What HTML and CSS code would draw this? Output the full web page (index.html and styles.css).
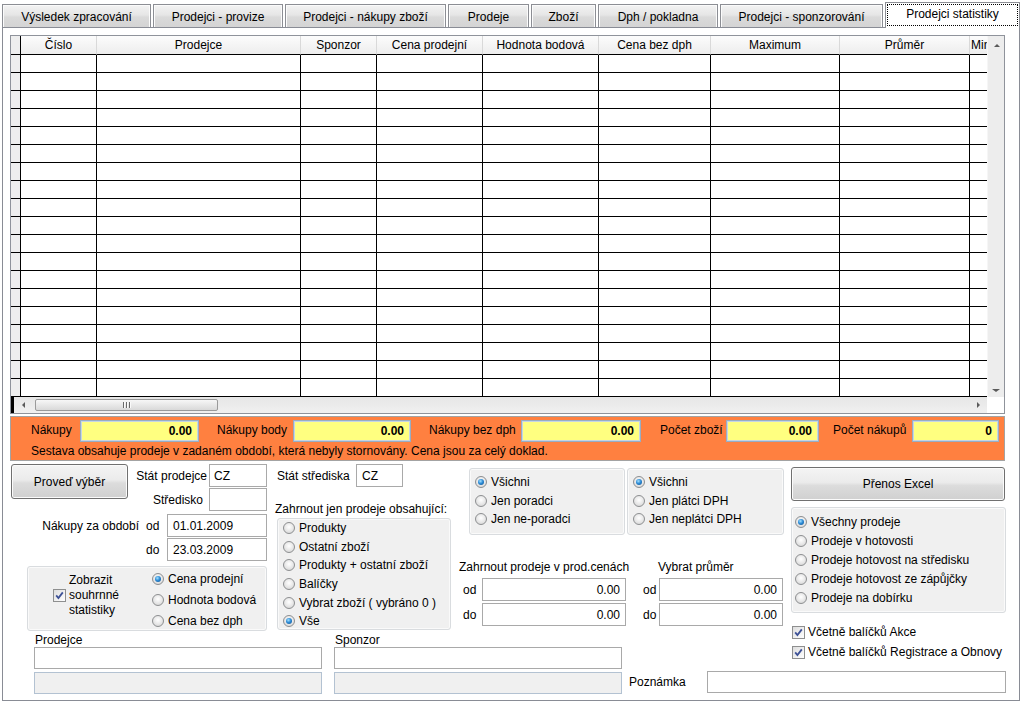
FILE: index.html
```html
<!DOCTYPE html>
<html lang="cs">
<head>
<meta charset="utf-8">
<title>Prodejci statistiky</title>
<link rel="stylesheet" href="styles.css">
</head>
<body>
<div class="tabs">
  <div class="tab">Výsledek zpracování</div>
  <div class="tab">Prodejci - provize</div>
  <div class="tab">Prodejci - nákupy zboží</div>
  <div class="tab">Prodeje</div>
  <div class="tab">Zboží</div>
  <div class="tab">Dph / pokladna</div>
  <div class="tab">Prodejci - sponzorování</div>
  <div class="tab active"><span class="focus">Prodejci statistiky</span></div>
</div>
<div class="panel">
  <div class="grid">
    <div class="cells">
      <div class="r hd"><span></span><span>Číslo</span><span>Prodejce</span><span>Sponzor</span><span>Cena prodejní</span><span>Hodnota bodová</span><span>Cena bez dph</span><span>Maximum</span><span>Průměr</span><span>Minimum</span></div>
      <div class="r"><i></i><i></i><i></i><i></i><i></i><i></i><i></i><i></i><i></i><i></i></div>
      <div class="r"><i></i><i></i><i></i><i></i><i></i><i></i><i></i><i></i><i></i><i></i></div>
      <div class="r"><i></i><i></i><i></i><i></i><i></i><i></i><i></i><i></i><i></i><i></i></div>
      <div class="r"><i></i><i></i><i></i><i></i><i></i><i></i><i></i><i></i><i></i><i></i></div>
      <div class="r"><i></i><i></i><i></i><i></i><i></i><i></i><i></i><i></i><i></i><i></i></div>
      <div class="r"><i></i><i></i><i></i><i></i><i></i><i></i><i></i><i></i><i></i><i></i></div>
      <div class="r"><i></i><i></i><i></i><i></i><i></i><i></i><i></i><i></i><i></i><i></i></div>
      <div class="r"><i></i><i></i><i></i><i></i><i></i><i></i><i></i><i></i><i></i><i></i></div>
      <div class="r"><i></i><i></i><i></i><i></i><i></i><i></i><i></i><i></i><i></i><i></i></div>
      <div class="r"><i></i><i></i><i></i><i></i><i></i><i></i><i></i><i></i><i></i><i></i></div>
      <div class="r"><i></i><i></i><i></i><i></i><i></i><i></i><i></i><i></i><i></i><i></i></div>
      <div class="r"><i></i><i></i><i></i><i></i><i></i><i></i><i></i><i></i><i></i><i></i></div>
      <div class="r"><i></i><i></i><i></i><i></i><i></i><i></i><i></i><i></i><i></i><i></i></div>
      <div class="r"><i></i><i></i><i></i><i></i><i></i><i></i><i></i><i></i><i></i><i></i></div>
      <div class="r"><i></i><i></i><i></i><i></i><i></i><i></i><i></i><i></i><i></i><i></i></div>
      <div class="r"><i></i><i></i><i></i><i></i><i></i><i></i><i></i><i></i><i></i><i></i></div>
      <div class="r"><i></i><i></i><i></i><i></i><i></i><i></i><i></i><i></i><i></i><i></i></div>
      <div class="r"><i></i><i></i><i></i><i></i><i></i><i></i><i></i><i></i><i></i><i></i></div>
      <div class="r"><i></i><i></i><i></i><i></i><i></i><i></i><i></i><i></i><i></i><i></i></div>
    </div>
    <div class="vscroll"><span class="arr up"></span><span class="arr down"></span></div>
    <div class="hscroll"><span class="hbar"></span><span class="arr left"></span><span class="thumb"><span class="grip"></span></span><span class="arr right"></span></div>
    <div class="corner"></div>
  </div>

  <div class="summary">
    <div class="sum-row">
      <span class="sum-lbl">Nákupy</span><span class="yf">0.00</span>
      <span class="sum-lbl p18">Nákupy body</span><span class="yf">0.00</span>
      <span class="sum-lbl p18">Nákupy bez dph</span><span class="yf">0.00</span>
      <span class="sum-lbl p19">Počet zboží</span><span class="yf">0.00</span>
      <span class="sum-lbl p14">Počet nákupů</span><span class="yf">0</span>
    </div>
    <div class="sum-note">Sestava obsahuje prodeje v zadaném období, která nebyly stornovány. Cena jsou za celý doklad.</div>
  </div>

  <div class="bottom">
    <div class="leftmain">
      <div class="toprow">
        <div class="colA">
          <div class="a-row1">
            <div class="btn btn-run">Proveď výběr</div>
            <div class="pair-grid">
              <span class="plbl">Stát prodejce</span><span class="inp w58">CZ</span>
              <span class="plbl pr6">Středisko</span><span class="inp w58"></span>
            </div>
          </div>
          <div class="date-row"><span class="lbl-period">Nákupy za období</span><span class="lbl-od">od</span><span class="inp date">01.01.2009</span></div>
          <div class="date-row second"><span class="lbl-period"></span><span class="lbl-od">do</span><span class="inp date">23.03.2009</span></div>
          <div class="group gA">
            <div class="chk-block">
              <span class="chk"><svg width="11" height="11" viewBox="0 0 11 11"><path d="M2.2 5.4 L4.4 8 L8.8 2.4" fill="none" stroke="#3d5196" stroke-width="1.8"/></svg></span>
              <span class="chk-text">Zobrazit<br>souhrnné<br>statistiky</span>
            </div>
            <div class="radios rA">
              <div class="ropt"><span class="radio on"></span>Cena prodejní</div>
              <div class="ropt"><span class="radio"></span>Hodnota bodová</div>
              <div class="ropt"><span class="radio"></span>Cena bez dph</div>
            </div>
          </div>
        </div>

        <div class="colB">
          <div class="b-row"><span class="b-lbl">Stát střediska</span><span class="inp w47">CZ</span></div>
          <div class="b-title">Zahrnout jen prodeje obsahující:</div>
          <div class="group gB">
            <div class="ropt"><span class="radio"></span>Produkty</div>
            <div class="ropt"><span class="radio"></span>Ostatní zboží</div>
            <div class="ropt"><span class="radio"></span>Produkty + ostatní zboží</div>
            <div class="ropt"><span class="radio"></span>Balíčky</div>
            <div class="ropt"><span class="radio"></span>Vybrat zboží ( vybráno 0 )</div>
            <div class="ropt"><span class="radio on"></span>Vše</div>
          </div>
        </div>

        <div class="colC">
          <div class="c-groups">
            <div class="group gC1">
              <div class="ropt"><span class="radio on"></span>Všichni</div>
              <div class="ropt"><span class="radio"></span>Jen poradci</div>
              <div class="ropt"><span class="radio"></span>Jen ne-poradci</div>
            </div>
            <div class="group gC2">
              <div class="ropt"><span class="radio on"></span>Všichni</div>
              <div class="ropt"><span class="radio"></span>Jen plátci DPH</div>
              <div class="ropt"><span class="radio"></span>Jen neplátci DPH</div>
            </div>
          </div>
          <div class="c-ranges">
            <div class="range range1">
              <div class="r-title">Zahrnout prodeje v prod.cenách</div>
              <div class="r-row"><span class="r-lbl">od</span><span class="inp num w144">0.00</span></div>
              <div class="r-row second"><span class="r-lbl">do</span><span class="inp num w144">0.00</span></div>
            </div>
            <div class="range range2">
              <div class="r-title">Vybrat průměr</div>
              <div class="r-row"><span class="r-lbl">od</span><span class="inp num w124">0.00</span></div>
              <div class="r-row second"><span class="r-lbl">do</span><span class="inp num w124">0.00</span></div>
            </div>
          </div>
        </div>
      </div>

      <div class="botrow">
        <div class="pblock">
          <div class="f-lbl">Prodejce</div>
          <div class="inp wide"></div>
          <div class="inp wide dis"></div>
        </div>
        <div class="pblock sblock">
          <div class="f-lbl">Sponzor</div>
          <div class="inp wide"></div>
          <div class="inp wide dis"></div>
        </div>
        <div class="nblock">
          <span class="n-lbl">Poznámka</span>
          <span class="inp note"></span>
        </div>
      </div>
    </div>

    <div class="colD">
      <div class="btn btn-excel">Přenos Excel</div>
      <div class="group gD">
        <div class="ropt"><span class="radio on"></span>Všechny prodeje</div>
        <div class="ropt"><span class="radio"></span>Prodeje v hotovosti</div>
        <div class="ropt"><span class="radio"></span>Prodeje hotovost na středisku</div>
        <div class="ropt"><span class="radio"></span>Prodeje hotovost ze zápůjčky</div>
        <div class="ropt"><span class="radio"></span>Prodeje na dobírku</div>
      </div>
      <div class="chk-row first"><span class="chk"><svg width="11" height="11" viewBox="0 0 11 11"><path d="M2.2 5.4 L4.4 8 L8.8 2.4" fill="none" stroke="#3d5196" stroke-width="1.8"/></svg></span>Včetně balíčků Akce</div>
      <div class="chk-row"><span class="chk"><svg width="11" height="11" viewBox="0 0 11 11"><path d="M2.2 5.4 L4.4 8 L8.8 2.4" fill="none" stroke="#3d5196" stroke-width="1.8"/></svg></span>Včetně balíčků Registrace a Obnovy</div>
    </div>
  </div>
</div>
</body>
</html>
```

FILE: styles.css
```css
* { box-sizing: border-box; }
html, body { margin: 0; padding: 0; background: #fff; }
body {
  width: 1023px;
  height: 703px;
  overflow: hidden;
  font-family: "Liberation Sans", Arial, sans-serif;
  font-size: 12px;
  color: #000;
}

/* ---------- tabs ---------- */
.tabs {
  display: flex;
  align-items: flex-end;
  gap: 2px;
  height: 27px;
  padding-left: 2px;
}
.tab {
  flex: 0 0 auto;
  height: 23px;
  display: flex;
  align-items: center;
  justify-content: center;
  white-space: nowrap;
  border: 1px solid #8c8e94;
  border-bottom: none;
  background: linear-gradient(#f3f3f3, #e6e6e6 45%, #dadada 55%, #d4d4d4);
  box-shadow: inset 1px 1px 0 #fbfbfb, inset -1px 0 0 #fbfbfb;
  padding-top: 1px;
}
.tab:nth-child(1) { width: 149px; }
.tab:nth-child(2) { width: 130px; }
.tab:nth-child(3) { width: 161px; }
.tab:nth-child(4) { width: 81px; }
.tab:nth-child(5) { width: 65px; }
.tab:nth-child(6) { width: 120px; }
.tab:nth-child(7) { width: 163px; }
.tab.active {
  width: 135px;
  height: 26px;
  margin-bottom: -1px;
  background: #fff;
  box-shadow: none;
  padding: 1px 1px 2px 1px;
  position: relative;
  z-index: 1;
  align-items: stretch;
}
.focus {
  flex: 1;
  display: flex;
  align-items: center;
  justify-content: center;
  border: 1px dotted #000;
  padding-bottom: 2px;
}

/* ---------- panel ---------- */
.panel {
  margin-left: 2px;
  width: 1018px;
  height: 674px;
  border: 1px solid #898c95;
  background: #fff;
  padding: 7px 0 0 7px;
}

/* ---------- data grid ---------- */
.grid {
  width: 995px;
  height: 379px;
  border: 1px solid #8f939b;
  display: grid;
  grid-template-columns: 976px 17px;
  grid-template-rows: 361px 16px;
}
.cells { overflow: hidden; }
.r { display: flex; height: 18px; }
.r > * {
  flex: 0 0 auto;
  display: block;
  height: 18px;
  border-right: 1px solid #000;
  border-bottom: 1px solid #000;
  background: #fff;
  overflow: hidden;
  white-space: nowrap;
}
.r > :nth-child(1) { width: 10px; background: #eeeeee; }
.r > :nth-child(2) { width: 76px; }
.r > :nth-child(3) { width: 204px; }
.r > :nth-child(4) { width: 76px; }
.r > :nth-child(5) { width: 106px; }
.r > :nth-child(6) { width: 116px; }
.r > :nth-child(7) { width: 112px; }
.r > :nth-child(8) { width: 129px; }
.r > :nth-child(9) { width: 130px; }
.r > :nth-child(10) { width: 130px; }
.r.hd { height: 19px; }
.r.hd > * {
  height: 19px;
  line-height: 18px;
  text-align: center;
  background: linear-gradient(#fcfcfc, #ededed);
  border-right-color: #d9d9d9;
}
.r.hd > :nth-child(1) { border-right-color: #000; background: #eeeeee; }
.r.hd > :nth-child(10) { text-align: left; padding-left: 1px; }

.vscroll {
  grid-column: 2;
  grid-row: 1;
  background: #ededed;
  border-left: 1px solid #f6f6f6;
  display: flex;
  flex-direction: column;
  justify-content: space-between;
  align-items: center;
  padding: 8px 0 5px 0;
}
.hscroll {
  grid-column: 1;
  grid-row: 2;
  background: linear-gradient(#e6e6e6, #f0f0f0);
  display: flex;
  align-items: center;
}
.corner { grid-column: 2; grid-row: 2; background: #fff; }
.hbar { width: 3px; height: 16px; background: #000; flex: 0 0 auto; }
.arr { width: 0; height: 0; flex: 0 0 auto; }
.arr.up { border-left: 3px solid transparent; border-right: 3px solid transparent; border-bottom: 3px solid #5a5a5a; margin-left: 1px; }
.arr.down { border-left: 4px solid transparent; border-right: 4px solid transparent; border-top: 3px solid #5a5a5a; }
.arr.left { border-top: 3px solid transparent; border-bottom: 3px solid transparent; border-right: 3px solid #5a5a5a; margin-left: 8px; }
.arr.right { border-top: 3px solid transparent; border-bottom: 3px solid transparent; border-left: 3px solid #5a5a5a; margin-left: auto; margin-right: 7px; }
.thumb {
  flex: 0 0 auto;
  width: 183px;
  height: 12px;
  margin-left: 10px;
  border: 1px solid #9a9a9a;
  border-radius: 2px;
  background: linear-gradient(#f7f7f7, #e8e8e8 50%, #d9d9d9);
  display: flex;
  align-items: center;
  justify-content: center;
}
.grip {
  width: 8px;
  height: 6px;
  background: repeating-linear-gradient(90deg, #6a6a6a 0 1px, #fafafa 1px 2px, transparent 2px 3px);
}

/* ---------- orange summary ---------- */
.summary {
  width: 995px;
  height: 45px;
  margin-top: 2px;
  border: 1px solid #a3a3a3;
  background: #ff8040;
  padding: 3px 0 0 20px;
}
.sum-row {
  display: grid;
  grid-template-columns: 49px 119px 94px 118px 110px 120px 85px 93px 93px 87px;
  height: 22px;
}
.sum-lbl { padding-top: 3px; line-height: 14px; white-space: nowrap; }
.sum-lbl.p18 { padding-left: 18px; }
.sum-lbl.p19 { padding-left: 19px; }
.sum-lbl.p14 { padding-left: 14px; }
.yf {
  display: flex;
  align-items: center;
  justify-content: flex-end;
  padding-right: 6px;
  background: #ffff80;
  border: 1px solid #98adc3;
  box-shadow: inset 0 0 0 1px #c6d5e4;
  font-weight: bold;
}
.sum-note { margin-top: 2px; line-height: 14px; white-space: nowrap; }

/* ---------- shared controls ---------- */
.inp {
  flex: 0 0 auto;
  display: flex;
  align-items: center;
  height: 23px;
  border: 1px solid #a9a9a9;
  background: #fff;
  padding: 0 4px;
  white-space: nowrap;
}
.inp.num { justify-content: flex-end; padding-right: 5px; }
.inp.dis { background: #f0f0f0; border-color: #b3c2d2; }
.w58 { width: 58px; }
.w47 { width: 47px; padding-left: 5px; }
.w144 { width: 144px; }
.w124 { width: 124px; }

.btn {
  flex: 0 0 auto;
  display: flex;
  align-items: center;
  justify-content: center;
  border: 1px solid #707070;
  border-radius: 3px;
  background: linear-gradient(#f4f4f4, #ebebeb 45%, #dcdcdc 55%, #d0d0d0);
  box-shadow: inset 0 0 0 1px #fbfbfb;
  white-space: nowrap;
}

.group {
  flex: 0 0 auto;
  background: #f0f0f0;
  border: 1px solid #d9dcdf;
  border-radius: 3px;
  box-shadow: inset 0 0 0 1px #fafafa;
}
.ropt { display: flex; align-items: center; white-space: nowrap; height: 18.6px; }
.radio {
  flex: 0 0 auto;
  width: 12px;
  height: 12px;
  margin-right: 4px;
  border-radius: 50%;
  border: 1px solid #8d8f91;
  background: radial-gradient(circle at 50% 40%, #ffffff 0%, #ebebeb 45%, #cfcfcf 100%);
  display: flex;
  align-items: center;
  justify-content: center;
}
.radio.on::after {
  content: "";
  width: 6px;
  height: 6px;
  border-radius: 50%;
  background: radial-gradient(circle at 40% 35%, #a4e2ff 0%, #2d8bd6 45%, #0f4d88 100%);
}
.chk {
  flex: 0 0 auto;
  width: 13px;
  height: 13px;
  border: 1px solid #8e8f8f;
  background: linear-gradient(135deg, #dedede, #ffffff);
  display: flex;
  align-items: center;
  justify-content: center;
  margin-right: 3px;
}

/* ---------- bottom area ---------- */
.bottom { display: flex; padding-left: 1px; }
.leftmain { flex: 0 0 auto; width: 776px; display: flex; flex-direction: column; }
.toprow { display: flex; height: 170px; }

.colA { flex: 0 0 auto; width: 256px; padding-top: 3px; }
.a-row1 { display: flex; align-items: flex-start; }
.btn-run { width: 117px; height: 35px; }
.pair-grid { display: grid; grid-template-columns: 81px 58px; row-gap: 1px; }
.plbl { align-self: center; text-align: right; padding-right: 2px; white-space: nowrap; }
.plbl.pr6 { padding-right: 6px; }
.date-row { display: flex; align-items: center; height: 23px; margin-top: 3px; }
.date-row.second { margin-top: 1px; }
.lbl-period { width: 128px; text-align: right; white-space: nowrap; flex: 0 0 auto; }
.lbl-od { width: 28px; padding-left: 7px; flex: 0 0 auto; }
.date { width: 100px; padding-left: 5px; }

.gA { margin: 5px 0 0 16px; width: 240px; height: 65px; display: flex; }
.chk-block { width: 124px; padding: 6px 0 0 25px; display: flex; align-items: center; align-self: flex-start; }
.chk-text { line-height: 15px; text-align: left; }
.rA .ropt { height: 21px; }
.rA { padding-top: 1px; }

.colB { flex: 0 0 auto; width: 176px; margin-left: 8px; padding-top: 3px; }
.b-row { display: flex; align-items: center; height: 23px; }
.b-lbl { width: 81px; padding-left: 2px; white-space: nowrap; flex: 0 0 auto; }
.b-title { margin-top: 15px; line-height: 14px; white-space: nowrap; }
.gB { margin: 2px 0 0 2px; width: 174px; height: 112px; padding-left: 5px; }

.colC { flex: 0 0 auto; width: 325px; margin-left: 8px; }
.c-groups { display: flex; gap: 2px; margin: 7px 0 0 10px; }
.gC1, .gC2 { height: 67px; padding: 4px 0 0 5px; }
.gC1 { width: 156px; }
.gC2 { width: 157px; }
.c-ranges { display: flex; margin-top: 25px; }
.range1 { width: 167px; flex: 0 0 auto; }
.range2 { width: 140px; margin-left: 17px; flex: 0 0 auto; }
.r-title { line-height: 14px; white-space: nowrap; }
.range2 .r-title { padding-left: 15px; }
.r-row { display: flex; align-items: center; margin-top: 4px; }
.r-row.second { margin-top: 2px; }
.range1 .r-lbl { width: 23px; padding-left: 4px; flex: 0 0 auto; }
.range2 .r-lbl { width: 16px; flex: 0 0 auto; }

.botrow { display: flex; align-items: flex-end; margin-top: 2px; }
.pblock { flex: 0 0 auto; width: 288px; margin-left: 23px; }
.sblock { margin-left: 12px; }
.f-lbl { line-height: 14px; padding-left: 1px; }
.inp.wide { height: 22px; }
.inp.wide.dis { margin-top: 3px; }
.nblock { flex: 0 0 auto; display: flex; align-items: center; margin: 0 0 1px 7px; }
.n-lbl { width: 78px; flex: 0 0 auto; }
.inp.note { width: 299px; height: 22px; }

.colD { flex: 0 0 auto; width: 215px; margin-left: 4px; }
.btn-excel { width: 214px; height: 34px; margin-top: 6px; }
.gD { width: 215px; height: 106px; margin-top: 6px; padding: 4px 0 0 3px; }
.gD .ropt { height: 19px; }
.chk-row { display: flex; align-items: center; height: 20px; padding-left: 1px; white-space: nowrap; }
.chk-row.first { margin-top: 9px; }
```
